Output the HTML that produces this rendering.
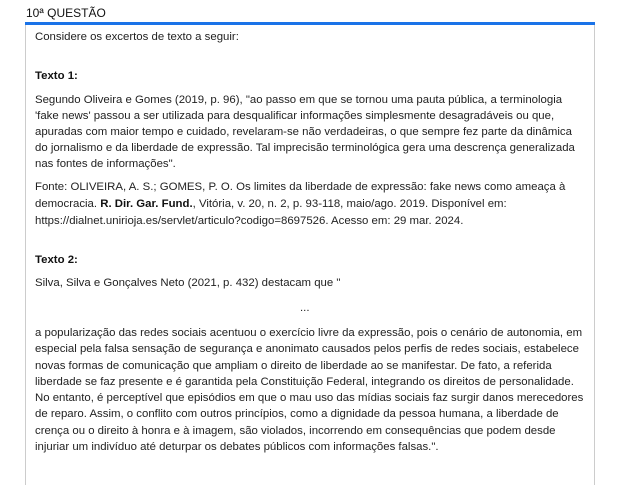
<!DOCTYPE html>
<html><head><meta charset="utf-8"><style>
body{margin:0;background:#fff;font-family:"Liberation Sans",sans-serif;color:#222;}
.t{position:absolute;left:26px;top:6px;font-size:12px;color:#111;}
.bar{position:absolute;left:25px;top:22px;width:570px;height:3px;background:#1a73e8;}
.box{position:absolute;left:25px;top:25px;width:568px;height:460px;border-left:1px solid #ccc;border-right:1px solid #ccc;}
.c{position:absolute;left:35px;font-size:11.4px;line-height:16px;white-space:nowrap;}
b{font-weight:bold;color:#111}
</style></head><body>
<div class="t">10ª QUESTÃO</div>
<div class="bar"></div>
<div class="box"></div>
<div class="c" style="top:29px">Considere os excertos de texto a seguir:</div>
<div class="c" style="top:68px"><b>Texto 1:</b></div>
<div class="c" style="top:92px">Segundo Oliveira e Gomes (2019, p. 96), "ao passo em que se tornou uma pauta pública, a terminologia<br>'fake news' passou a ser utilizada para desqualificar informações simplesmente desagradáveis ou que,<br>apuradas com maior tempo e cuidado, revelaram-se não verdadeiras, o que sempre fez parte da dinâmica<br>do jornalismo e da liberdade de expressão. Tal imprecisão terminológica gera uma descrença generalizada<br>nas fontes de informações".</div>
<div class="c" style="top:179px;line-height:17px">Fonte: OLIVEIRA, A. S.; GOMES, P. O. Os limites da liberdade de expressão: fake news como ameaça à<br>democracia. <b>R. Dir. Gar. Fund.</b>, Vitória, v. 20, n. 2, p. 93-118, maio/ago. 2019. Disponível em:<br>https://dialnet.unirioja.es/servlet/articulo?codigo=8697526. Acesso em: 29 mar. 2024.</div>
<div class="c" style="top:252px"><b>Texto 2:</b></div>
<div class="c" style="top:275px">Silva, Silva e Gonçalves Neto (2021, p. 432) destacam que "</div>
<div class="c" style="top:300px;left:300px">...</div>
<div class="c" style="top:325px;line-height:16.3px">a popularização das redes sociais acentuou o exercício livre da expressão, pois o cenário de autonomia, em<br>especial pela falsa sensação de segurança e anonimato causados pelos perfis de redes sociais, estabelece<br>novas formas de comunicação que ampliam o direito de liberdade ao se manifestar. De fato, a referida<br>liberdade se faz presente e é garantida pela Constituição Federal, integrando os direitos de personalidade.<br>No entanto, é perceptível que episódios em que o mau uso das mídias sociais faz surgir danos merecedores<br>de reparo. Assim, o conflito com outros princípios, como a dignidade da pessoa humana, a liberdade de<br>crença ou o direito à honra e à imagem, são violados, incorrendo em consequências que podem desde<br>injuriar um indivíduo até deturpar os debates públicos com informações falsas.".</div>
</body></html>
